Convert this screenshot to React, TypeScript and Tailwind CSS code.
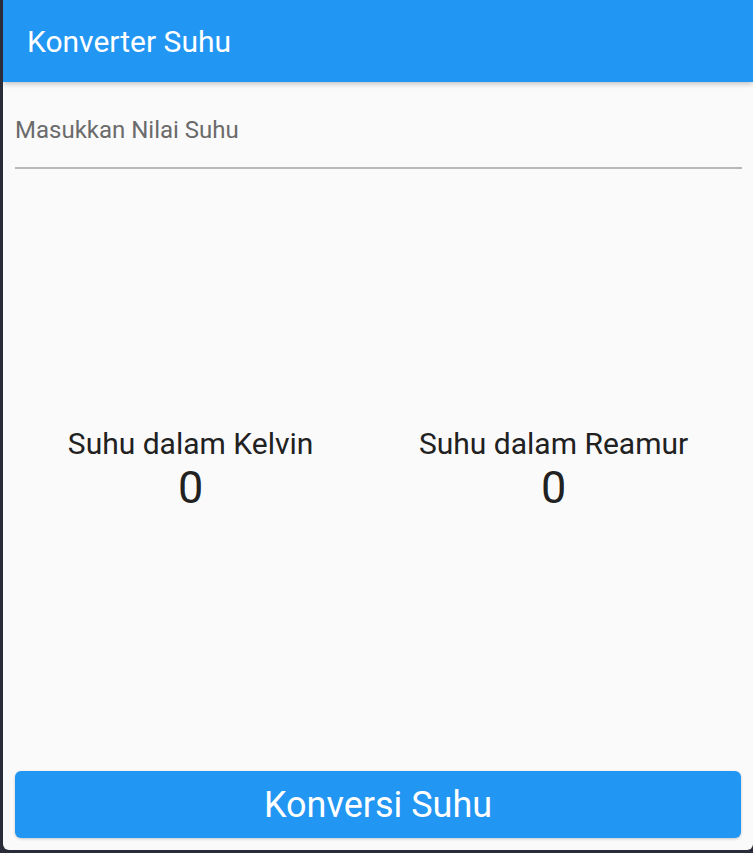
import React, { useState } from 'react';

export default function App() {
  const [value, setValue] = useState('');
  const [kelvin, setKelvin] = useState<number>(0);
  const [reamur, setReamur] = useState<number>(0);

  const onConvert = () => {
    const c = parseFloat(value);
    if (isNaN(c)) return;
    setKelvin(c + 273);
    setReamur((c * 4) / 5);
  };

  return (
    <div className="w-[753px] h-[853px] bg-[#2a2c3a] pl-[3px] font-['Roboto',sans-serif] overflow-hidden">
      <div className="w-[750px] h-[850px] bg-[#fafafa] rounded-b-[6px] flex flex-col overflow-hidden">
        <div className="relative z-10 h-[82px] shrink-0 bg-[#2196f3] flex items-center pl-[24px] shadow-[0_2px_5px_rgba(0,0,0,0.22)]">
          <h1 className="text-white text-[30px] leading-[35px]">Konverter Suhu</h1>
        </div>

        <div className="px-[12px] shrink-0">
          <div className="pt-[34px] pb-[22px] border-b-2 border-[#b8b8b8] mr-[-1px]">
            <input
              value={value}
              onChange={e => setValue(e.target.value)}
              placeholder="Masukkan Nilai Suhu"
              className="w-full bg-transparent outline-none text-[24px] leading-[28px] text-[#212121] placeholder:text-[#6b6b6b]"
            />
          </div>
        </div>

        <div className="flex-1 mx-[12px] flex items-center justify-around">
          <div className="flex flex-col items-center text-[#212121]">
            <span className="text-[30px] leading-[35px]">Suhu dalam Kelvin</span>
            <span className="text-[45px] leading-[53px]">{kelvin}</span>
          </div>
          <div className="flex flex-col items-center text-[#212121]">
            <span className="text-[30px] leading-[35px]">Suhu dalam Reamur</span>
            <span className="text-[45px] leading-[53px]">{reamur}</span>
          </div>
        </div>

        <div className="px-[12px] pb-[12px] shrink-0">
          <button
            type="button"
            onClick={onConvert}
            className="w-full h-[67px] rounded-[6px] bg-[#2196f3] text-white text-[36px] leading-[42px] flex items-center justify-center shadow-[0_1px_3px_rgba(0,0,0,0.2)]"
          >
            Konversi Suhu
          </button>
        </div>
      </div>
    </div>
  );
}
